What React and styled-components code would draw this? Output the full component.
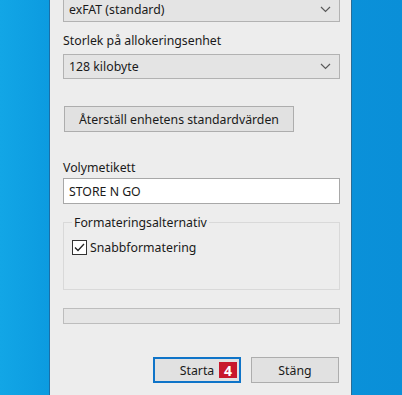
import React from "react";
import styled, { createGlobalStyle } from "styled-components";

const GlobalStyle = createGlobalStyle`
  html, body {
    margin: 0;
    padding: 0;
    width: 402px;
    height: 395px;
    overflow: hidden;
  }
  body {
    background: linear-gradient(90deg, #12a6e6 0%, #0c9be0 12%, #0a8fd8 100%);
    font-family: "Noto Sans", "Open Sans", sans-serif;
  }
`;

const Screen = styled.div`
  display: flex;
  width: 402px;
  height: 395px;
  padding-left: 49px;
  box-sizing: border-box;
`;

const Dialog = styled.div`
  display: flex;
  flex-direction: column;
  width: 303px;
  height: 395px;
  box-sizing: border-box;
  background: #ededed;
  border-left: 1px solid #1a6fa8;
  border-right: 1px solid #2a6c96;
  padding: 0 11px 0 13px;
  font-size: 12.3px;
  color: #1a1a1a;
`;

const Combo = styled.div`
  display: flex;
  align-items: center;
  justify-content: space-between;
  height: 25px;
  box-sizing: border-box;
  margin-top: ${(p) => p.$top || 0}px;
  padding: 0 8px 0 5px;
  background: #e4e4e4;
  border: 1px solid #b2b2b2;
`;

const Label = styled.div`
  margin-top: ${(p) => p.$top || 0}px;
  height: 18px;
  line-height: 18px;
`;

const Chevron = () => (
  <svg width="11" height="7" viewBox="0 0 11 7">
    <path d="M1 1l4.5 4.5L10 1" fill="none" stroke="#5a5a5a" strokeWidth="1.2" />
  </svg>
);

const Button = styled.div`
  position: relative;
  display: flex;
  align-items: center;
  justify-content: center;
  height: 26px;
  box-sizing: border-box;
  background: #e1e1e1;
  border: 1px solid ${(p) => (p.$primary ? "#0f74c8" : "#adadad")};
  box-shadow: ${(p) => (p.$primary ? "inset 0 0 0 1px #0f74c8" : "none")};
`;

const ResetButton = styled(Button)`
  width: 230px;
  margin-top: 27px;
  margin-left: 1px;
`;

const TextInput = styled.div`
  display: flex;
  align-items: center;
  height: 26px;
  box-sizing: border-box;
  margin-top: 1px;
  padding-left: 5px;
  background: #ffffff;
  border: 1px solid #a8a8a8;
`;

const Group = styled.fieldset`
  margin: 10px 0 0;
  padding: 0 0 0 8px;
  height: 76px;
  box-sizing: border-box;
  border: 1px solid #d9d9d9;
  font-size: 12.3px;
`;

const Legend = styled.legend`
  padding: 0 2px;
  color: #1a1a1a;
`;

const CheckRow = styled.div`
  display: flex;
  align-items: center;
  gap: 3px;
  margin-top: 8px;
`;

const Box = styled.div`
  display: flex;
  align-items: center;
  justify-content: center;
  width: 15px;
  height: 15px;
  box-sizing: border-box;
  border: 1px solid #333;
  background: #fff;
`;

const Progress = styled.div`
  height: 16px;
  margin-top: 18px;
  box-sizing: border-box;
  background: #e6e6e6;
  border: 1px solid #bdbdbd;
`;

const Footer = styled.div`
  display: flex;
  justify-content: flex-end;
  gap: 10px;
  margin-top: 33px;
  padding-right: 1px;
`;

const FooterButton = styled(Button)`
  width: 88px;
`;

const Badge = styled.span`
  position: absolute;
  right: 3px;
  top: 4px;
  display: flex;
  align-items: center;
  justify-content: center;
  width: 18px;
  height: 16px;
  background: #c8182c;
  color: #fff;
  font-weight: 700;
  font-size: 14px;
`;

export default function App() {
  return (
    <>
      <GlobalStyle />
      <Screen>
        <Dialog>
          <Combo $top={-3}>
            <span>exFAT (standard)</span>
            <Chevron />
          </Combo>
          <Label $top={10}>Storlek på allokeringsenhet</Label>
          <Combo $top={4}>
            <span>128 kilobyte</span>
            <Chevron />
          </Combo>
          <ResetButton>Återställ enhetens standardvärden</ResetButton>
          <Label $top={27}>Volymetikett</Label>
          <TextInput>STORE N GO</TextInput>
          <Group>
            <Legend>Formateringsalternativ</Legend>
            <CheckRow>
              <Box>
                <svg width="11" height="9" viewBox="0 0 11 9">
                  <path d="M1 4.5l3 3L10 1" fill="none" stroke="#222" strokeWidth="1.3" />
                </svg>
              </Box>
              <span>Snabbformatering</span>
            </CheckRow>
          </Group>
          <Progress />
          <Footer>
            <FooterButton $primary>
              Starta
              <Badge>4</Badge>
            </FooterButton>
            <FooterButton>Stäng</FooterButton>
          </Footer>
        </Dialog>
      </Screen>
    </>
  );
}
